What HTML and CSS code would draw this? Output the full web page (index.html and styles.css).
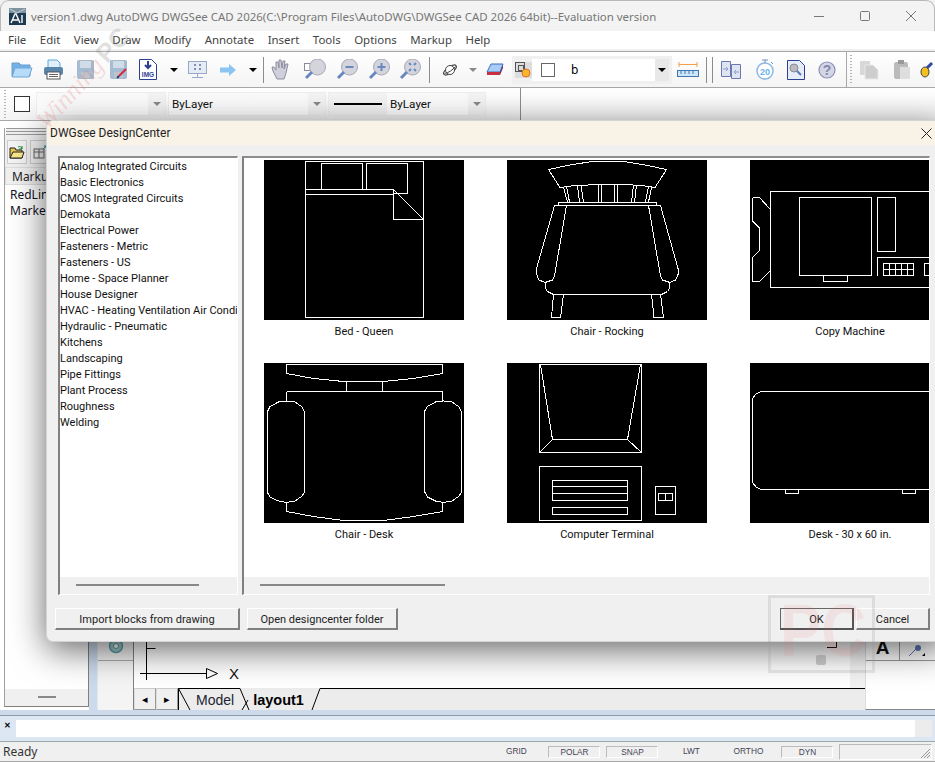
FILE: index.html
```html
<!DOCTYPE html>
<html lang="en">
  <head>
    <meta charset="UTF-8" />
    <title>DWGSee CAD 2026</title>
    <link rel="stylesheet" href="styles.css">
  </head>
  <body>
    <div class="window">
      <header class="titlebar">
        <svg class="applogo" width="17" height="17" viewBox="0 0 17 17"><rect width="17" height="17" fill="#1d3a52"/><path d="M0 0h17v5H0z" fill="#7f929f"/><path d="M1 1l7 4 8-4" fill="none" stroke="#c8d2d8"/><path d="M2 15L6 6h1l4 9M4 12h5M13 7v8" fill="none" stroke="#fff" stroke-width="1.4"/></svg>
        <span class="apptitle">version1.dwg AutoDWG DWGSee CAD 2026(C:\Program Files\AutoDWG\DWGSee CAD 2026 64bit)--Evaluation version</span>
        <div class="winbtns">
          <svg width="12" height="12" viewBox="0 0 12 12"><path d="M1 6.500h10" stroke="#777"/></svg>
          <svg width="12" height="12" viewBox="0 0 12 12"><rect x="1.500" y="1.500" width="9" height="9" rx="1" fill="none" stroke="#777"/></svg>
          <svg width="12" height="12" viewBox="0 0 12 12"><path d="M1 1l10 10M11 1L1 11" stroke="#777"/></svg>
        </div>
      </header>

      <nav class="menubar">
        <span>File</span><span>Edit</span><span>View</span><span>Draw</span><span>Modify</span><span>Annotate</span><span>Insert</span><span>Tools</span><span>Options</span><span>Markup</span><span>Help</span>
      </nav>

      <div class="toolbar tb-one">
        <i class="grip"></i>
        <div class="slot s32"><svg width="22" height="17" viewBox="0 0 22 17"><path d="M1 15V2h7l2 2h9v11z" fill="#74b2e6" stroke="#6a9cc8"/><path d="M1 16l3-9h17l-3 9z" fill="#b8dcf8" stroke="#6aa8dc"/></svg></div>
        <div class="slot s30"><svg width="21" height="21" viewBox="0 0 21 21"><path d="M5 1h9l3 3v5H5z" fill="#dff0fb" stroke="#5aa6dc"/><rect x="1" y="8" width="19" height="8" rx="2" fill="#5a86ae"/><rect x="4" y="13" width="13" height="7" fill="#fff" stroke="#555"/><path d="M6 15.500h9M6 17.500h9" stroke="#666"/></svg></div>
        <div class="slot s35"><svg width="17" height="19" viewBox="0 0 17 19"><rect x=".5" y=".5" width="16" height="18" rx="1" fill="#a4bcd4" stroke="#a8b8c8"/><rect x="3" y="1" width="11" height="7" fill="#d0dde8"/><rect x="4" y="12" width="9" height="6" fill="#bcc4cc"/></svg></div>
        <div class="slot s31"><svg width="18" height="19" viewBox="0 0 18 19"><rect x=".5" y=".5" width="16" height="18" rx="1" fill="#a4bcd4" stroke="#a8b8c8"/><rect x="3" y="1" width="11" height="7" fill="#d0dde8"/><rect x="4" y="12" width="9" height="6" fill="#bcc4cc"/><path d="M9 16l7-7" stroke="#d8253a" stroke-width="2"/><path d="M7 18l2-2" stroke="#23408a" stroke-width="2"/></svg></div>
        <div class="slot s28"><svg width="18" height="21" viewBox="0 0 18 21"><path d="M.5.500h12l5 5v15H.5z" fill="#fff" stroke="#2b3f94"/><path d="M9 2v6M6 6l3 3 3-3" fill="none" stroke="#2b3f94" stroke-width="2"/><text x="9" y="18" class="imgtext">IMG</text></svg></div>
        <div class="slot s24"><i class="drop"></i></div>
        <div class="slot s23"><svg width="19" height="17" viewBox="0 0 19 17"><rect x=".5" y=".5" width="18" height="12" fill="#e6ecf6" stroke="#9aa8c8"/><path d="M6 3h2v2H6zM11 3h2v2h-2zM6 7h2v2H6zM11 7h2v2h-2z" fill="#8090b4"/><path d="M9.500 13v3M4 16.500h11" stroke="#9aa8c8"/></svg></div>
        <div class="slot s38"><svg width="16" height="12" viewBox="0 0 16 12"><path d="M0 3.500h9V0l7 6-7 6V8.500H0z" fill="#8cc4f2"/></svg></div>
        <div class="slot s12"><i class="drop"></i></div>
        <div class="slot s8"><i class="sep"></i></div>
        <div class="slot s28"><svg width="20" height="21" viewBox="0 0 20 21"><path d="M6 20L2 12 1 8l2 0 2 3V3l2 0 1 6V1h2l1 8 1-7h2l-1 8 2-5h2l-2 9-2 6z" fill="#d0d0dc" stroke="#8d8d9f"/></svg></div>
        <div class="slot s40"><svg width="22" height="21" viewBox="0 0 22 21"><rect x=".5" y="4.500" width="8" height="7" fill="#fff" stroke="#8a8a9c"/><circle cx="13.500" cy="8" r="8" fill="#d4d4dc" stroke="#a8a8b8"/><path d="M8 13l-6 6" stroke="#6a88c0" stroke-width="3"/></svg></div>
        <div class="slot s24"><svg width="22" height="21" viewBox="0 0 22 21"><circle cx="13.500" cy="8" r="8" fill="#d4d4dc" stroke="#a8a8b8"/><path d="M9.500 8h8" stroke="#6a88c0" stroke-width="2"/><path d="M8 13l-6 6" stroke="#6a88c0" stroke-width="3"/></svg></div>
        <div class="slot s40"><svg width="22" height="21" viewBox="0 0 22 21"><circle cx="13.500" cy="8" r="8" fill="#d4d4dc" stroke="#a8a8b8"/><path d="M9.500 8h8M13.500 4v8" stroke="#6a88c0" stroke-width="2"/><path d="M8 13l-6 6" stroke="#6a88c0" stroke-width="3"/></svg></div>
        <div class="slot s22"><svg width="22" height="21" viewBox="0 0 22 21"><circle cx="13.500" cy="8" r="8" fill="#d4d4dc" stroke="#a8a8b8"/><path d="M10 4l2 2M17 4l-2 2M10 12l2-2M17 12l-2-2" stroke="#6a88c0" stroke-width="2"/><path d="M8 13l-6 6" stroke="#6a88c0" stroke-width="3"/></svg></div>
        <div class="slot s16"><i class="sep"></i></div>
        <div class="slot s26"><svg width="16" height="14" viewBox="0 0 16 14"><ellipse cx="8" cy="7" rx="7.500" ry="3" transform="rotate(-35 8 7)" fill="none" stroke="#444"/><circle cx="8" cy="7" r="4.500" fill="#fff" stroke="#444"/><path d="M2.500 10.500C6 10 11 7 13.500 3.500" fill="none" stroke="#444"/></svg></div>
        <div class="slot s20"><i class="drop grey"></i></div>
        <div class="slot s23"><svg width="18" height="13" viewBox="0 0 18 13"><path d="M1 9l4-8h12l-3 8z" fill="#a9cdf4" stroke="#3a6fc0"/><path d="M1 9h13v3H1z" fill="#c83040"/><path d="M14 9l3-7v3l-3 7z" fill="#6a2a6a"/></svg></div>
        <div class="layercombo">
          <span class="layericon"><svg width="16" height="16" viewBox="0 0 16 16"><rect x=".5" y=".5" width="9" height="9" fill="none" stroke="#555"/><rect x="3.500" y="3.500" width="5" height="5" fill="#ddd" stroke="#555"/><circle cx="11" cy="11" r="4" fill="#f7b52b" stroke="#e0702a"/></svg></span>
          <div class="layerfield">
            <i class="swatch small"></i>
            <span class="layername">b</span>
          </div>
          <span class="combodrop"><i class="drop"></i></span>
        </div>
        <div class="slot s32"><svg width="22" height="15" viewBox="0 0 22 15"><path d="M2 2.500h18M2 0v5M20 0v5" stroke="#f0a050" fill="none"/><rect x=".5" y="8.500" width="21" height="6" fill="#cfe6fa" stroke="#3f76b0"/><path d="M4 9v3M8 9v3M12 9v3M16 9v3" stroke="#3f76b0"/></svg></div>
        <div class="slot s5"><i class="sep"></i></div>
        <div class="slot s6"><i class="sep"></i></div>
        <div class="slot s32"><svg width="20" height="18" viewBox="0 0 20 18"><path d="M.5.500h9v15h-9z" fill="#dfe4f2" stroke="#6a7ab0"/><path d="M10.500 3.500h9v14h-9z" fill="#dfe4f2" stroke="#6a7ab0"/><path d="M2 8h5M5 6l2 2-2 2M18 11h-5M15 9l-2 2 2 2" fill="none" stroke="#8aa0c8"/></svg></div>
        <div class="slot s36"><svg width="18" height="21" viewBox="0 0 18 21"><circle cx="9" cy="12" r="8" fill="#fff" stroke="#8cb8e4" stroke-width="1.500"/><path d="M6 1h6M9 1v3M15 3l2 2" stroke="#7090c0"/><text x="9" y="15.500" class="timer">20</text></svg></div>
        <div class="slot s26"><svg width="18" height="20" viewBox="0 0 18 20"><path d="M.5.500h12l5 5v14H.5z" fill="#e6ecf8" stroke="#2b3f94"/><circle cx="7" cy="8" r="4" fill="#bbb" stroke="#8a8a9c"/><path d="M10 11l4 4" stroke="#5878b4" stroke-width="2"/></svg></div>
        <div class="slot s36"><svg width="18" height="18" viewBox="0 0 18 18"><circle cx="9" cy="9" r="8" fill="#d4d6e6" stroke="#8c90b8" stroke-width="1.200"/><text x="9" y="14" class="helpmark">?</text></svg></div>
        <div class="slot s3"><i class="sep full"></i></div>
        <div class="slot s6"><i class="grip inner"></i></div>
        <div class="slot s30"><svg width="20" height="20" viewBox="0 0 20 20"><path d="M1 1h10v14H1z" fill="#d8d8d8"/><path d="M6 5h8l5 5v9H6z" fill="#cdcdcd" stroke="#e8e8e8"/></svg></div>
        <div class="slot s36"><svg width="18" height="19" viewBox="0 0 18 19"><rect x="1" y="2" width="14" height="17" rx="2" fill="#bbb"/><rect x="5" y="0" width="6" height="4" fill="#999"/><path d="M7 7h10v12H7z" fill="#dedede"/></svg></div>
        <div class="slot s16"><svg width="16" height="18" viewBox="0 0 16 18"><ellipse cx="5" cy="11" rx="4" ry="5" fill="#f4c020" stroke="#444"/><path d="M7 7l5-5" stroke="#3048a0" stroke-width="3"/></svg></div>
      </div>

      <div class="toolbar tb-two">
        <i class="grip"></i>
        <i class="swatch"></i>
        <div class="combo c-color"><span class="combotext"></span><span class="combodrop"><i class="drop grey"></i></span></div>
        <div class="combo c-layer"><span class="combotext">ByLayer</span><span class="combodrop"><i class="drop grey"></i></span></div>
        <div class="combo c-line"><i class="lineweight"></i><span class="combotext">ByLayer</span><span class="combodrop"><i class="drop grey"></i></span></div>
        <i class="rowsep"></i>
      </div>

      <main class="workspace">
        <aside class="dock">
          <div class="dockgrip"></div>
          <div class="docktools">
            <span class="dockbtn"><svg width="16" height="14" viewBox="0 0 16 14"><path d="M1 13V3h5l1 2h6v8z" fill="#e8c850" stroke="#222"/><path d="M1 13l3-6h11l-2 6z" fill="#f8e888" stroke="#222"/><path d="M9 2c2-1 4 0 4 2M13 1v3h-3" fill="none" stroke="#1a8a3a"/></svg></span>
            <span class="dockbtn"><svg width="14" height="14" viewBox="0 0 14 14"><rect x="1" y="4" width="10" height="9" fill="#eee" stroke="#666"/><path d="M1 7h10M6 4v9" stroke="#666"/><path d="M10 4l3-3M11 1h2v2" fill="none" stroke="#2a8a9a"/></svg></span>
          </div>
          <div class="dockhead">Markup</div>
          <ul class="docklist">
            <li>RedLine</li>
            <li>Markers</li>
          </ul>
          <div class="dockscroll"><i></i></div>
        </aside>
        <div class="gutter"></div>
        <div class="vtools">
          <div class="vbtn"><svg width="16" height="16" viewBox="0 0 16 16"><circle cx="8" cy="8" r="6.500" fill="#9cc8c8" stroke="#58a0a8" stroke-width="1.500"/><circle cx="8" cy="8" r="2.500" fill="#fff" stroke="#58a0a8"/></svg></div>
        </div>
        <section class="canvasarea">
          <div class="canvas">
            <svg class="ucs" width="100" height="46" viewBox="0 0 100 46"><path d="M6.500 0v38M6.500 6.500h9M0 31.500h66" stroke="#000" fill="none"/><path d="M66.500 26.500l11 5-11 5z" fill="none" stroke="#000"/></svg>
            <span class="ucsx">X</span>
            <svg class="corner" width="10" height="7" viewBox="0 0 10 7"><path d="M0 6.500h9.500V0" fill="none" stroke="#000"/></svg>
          </div>
          <div class="tabs">
            <button class="arrowbtn">&#9666;</button>
            <button class="arrowbtn">&#9656;</button>
            <svg class="tabshape" width="687" height="22" viewBox="0 0 687 22"><path d="M.5 22V.5H62L71 22M.5.500L12 22M64 22l6-10M142 .500h545M142 .500L134 22" fill="none" stroke="#000"/></svg>
            <span class="tab">Model</span>
            <span class="tab active">layout1</span>
          </div>
        </section>
        <div class="righttools">
          <div class="rightrow">
            <span class="rightcell"><b class="bigA">A</b></span>
            <span class="rightcell"><svg width="18" height="12" viewBox="0 0 18 12"><path d="M1 11l7-7" stroke="#5a78b8"/><circle cx="10" cy="3" r="3" fill="#5a78b8"/><path d="M14 11l3-3v3z" fill="#000"/></svg></span>
          </div>
        </div>
      </main>

      <div class="cmdbar">
        <span class="cmdclose">&#10005;</span>
        <div class="cmdinput"></div>
        <div class="cmdend"></div>
      </div>

      <footer class="statusbar">
        <span class="ready">Ready</span>
        <div class="modes">
          <span class="mode m-grid">GRID</span>
          <span class="mode on m-polar">POLAR</span>
          <span class="mode on m-snap">SNAP</span>
          <span class="mode m-lwt">LWT</span>
          <span class="mode m-ortho">ORTHO</span>
          <span class="mode on m-dyn">DYN</span>
        </div>
        <div class="sizebox"><svg width="12" height="12" viewBox="0 0 12 12"><path d="M11 2L2 11M11 5l-6 6M11 8l-3 3" stroke="#999"/></svg></div>
      </footer>

      <div class="dialog">
        <div class="dlgtitle">
          <span>DWGsee DesignCenter</span>
          <svg class="dlgclose" width="11" height="11" viewBox="0 0 11 11"><path d="M.5.500l10 10M10.500.500l-10 10" stroke="#222"/></svg>
        </div>
        <div class="panes">
          <div class="pane listpane">
            <ul class="catlist">
              <li>Analog Integrated Circuits</li>
              <li>Basic Electronics</li>
              <li>CMOS Integrated Circuits</li>
              <li>Demokata</li>
              <li>Electrical Power</li>
              <li>Fasteners - Metric</li>
              <li>Fasteners - US</li>
              <li>Home - Space Planner</li>
              <li>House Designer</li>
              <li>HVAC - Heating Ventilation Air Condit</li>
              <li>Hydraulic - Pneumatic</li>
              <li>Kitchens</li>
              <li>Landscaping</li>
              <li>Pipe Fittings</li>
              <li>Plant Process</li>
              <li>Roughness</li>
              <li>Welding</li>
            </ul>
            <div class="hscroll"><i class="thumb-left"></i></div>
          </div>
          <div class="pane gridpane">
            <div class="blocks">
              <figure class="block">
                <svg class="cad" width="200" height="160" viewBox="0 0 200 160">
                  <path d="M41.500 1.500h118v156h-118zM57.500 29.500v-26h41v26M102.500 29.500v-26h41v30h-14M41.500 29.500h88M41.500 34.500h88M129.500 29.500v30h30M129.500 29.500l30 30"/>
                </svg>
                <figcaption>Bed - Queen</figcaption>
              </figure>
              <figure class="block">
                <svg class="cad" width="200" height="160" viewBox="0 0 200 160">
                  <path d="M41.500 9.500L63 5l22-3.500h31.500L138 5l21.500 4.500L148 27.500 134.500 25.500 116.500 24.500h-22L68 25.500l-15 2zM41.500 9.500L53 27.500"/>
                  <path d="M56.500 27.500L60.500 42M59.500 26.500L62.500 42M70.500 25.500L72.500 42M74 25.500L76.500 42M91.500 24.500V42M94.500 24.500V42M107.500 24.500V42M110.500 24.500V42M126.500 25.500L124.500 42M129.500 25.500L127.500 42M141.500 26.500L138.500 42M144.500 27.500L141.500 42"/>
                  <path d="M51.500 42.500h98v3h-98zM57.500 42.500h87"/>
                  <path d="M47.500 45.500h12L47.500 116 45.500 120 38 122.500 32 120 29.500 114V108.500zM141.500 45.500h12l17.500 63v6L168.500 120 163 122.500 155.500 120 153.500 116z"/>
                  <path d="M38.500 122.500v6l2 3 6 3h108l6-3 2-3v-6M46.500 134.500L44.500 157.500h9L56.500 134.500M144.500 134.500L147 157.500h9.500L153.500 134.500"/>
                </svg>
                <figcaption>Chair - Rocking</figcaption>
              </figure>
              <figure class="block">
                <svg class="cad" width="200" height="160" viewBox="0 0 200 160">
                  <path d="M205 31.500H20.500v96H205M2.500 37.500h7L20.500 49.500M20.500 110.500l-11 11h-7v-24l6.500-6.500V67.500L2.500 61V37.500"/>
                  <path d="M49.500 37.500h72v78h-72zM73.500 115.500v6h24v-6M127.500 37.500h18v54h-18zM127.500 115.500v-18H205"/>
                  <path d="M133.500 103.500h30v12h-30zM133.500 109.500h30M139.500 103.500v12M145.500 103.500v12M151.500 103.500v12M157.500 103.500v12M174.500 103.500h12v12h-12z"/>
                </svg>
                <figcaption>Copy Machine</figcaption>
              </figure>
              <figure class="block">
                <svg class="cad" width="200" height="160" viewBox="0 0 200 160">
                  <path d="M22.500 1.500h156v9L149.500 15.500 119.500 18.500h-40L49.500 15.500 22.500 10.500zM82.500 18.500v10M118.500 18.500v10M22.500 28.500h156M22.500 28.500v10M178.500 28.500v10"/>
                  <path d="M3.500 48.500L6 43.500 14.500 39l8-1 8.500 1 6.500 4.500 3 5v81l-3 4L31 138l-8.500 1.500L14.500 138l-8.500-4-2.500-4.500z"/>
                  <path d="M160.500 48.500l3-5 8-4.500 8-1 8.500 1 6.500 4.500 3 5v81l-3 4-6.500 4.500-8.500 1.500-8-1.500-8-4-2.500-4.500z"/>
                  <path d="M22.500 139.500v9l27 5 30 4h40l30-4 29-5v-9"/>
                </svg>
                <figcaption>Chair - Desk</figcaption>
              </figure>
              <figure class="block">
                <svg class="cad" width="200" height="160" viewBox="0 0 200 160">
                  <path d="M32.500 1.500h102v88h-102zM33.500 1.500L45.500 76.500h75L133.500 1.500M45.500 76.500l-13 13M120.500 76.500l14 13"/>
                  <path d="M32.500 103.500h102v54h-102zM45.500 117.500h75v20h-75zM45.500 123.500h75M45.500 130.500h75M45.500 144.500h75v7h-75z"/>
                  <path d="M148.500 123.500h20v28h-20zM151.500 130.500h14v7h-14zM158.500 130.500v7"/>
                </svg>
                <figcaption>Computer Terminal</figcaption>
              </figure>
              <figure class="block">
                <svg class="cad" width="200" height="160" viewBox="0 0 200 160">
                  <path d="M205 28.500H11L6 31 3 35 2.500 40v74l.500 6 3 4 5 2.500H205M35.500 126.500v4h13v-4M152.500 126.500v4h13v-4"/>
                </svg>
                <figcaption>Desk - 30 x 60 in.</figcaption>
              </figure>
            </div>
            <div class="hscroll"><i class="thumb-right"></i></div>
          </div>
        </div>
        <div class="dlgbuttons">
          <button class="btn b-import">Import blocks from drawing</button>
          <button class="btn b-open">Open designcenter folder</button>
          <button class="btn b-ok">OK</button>
          <button class="btn b-cancel">Cancel</button>
        </div>
      </div>

      <div class="mark-top"><span class="mark-win">Winning</span> <span class="mark-pc">PC</span></div>
      <div class="mark-box"><span class="mark-letters">PC</span><i class="mark-dot"></i></div>
      <i class="mark-band"></i>
    </div>
  </body>
</html>
```

FILE: styles.css
```css
* {
  box-sizing: border-box;
}
body {
  margin: 0;
  background: #fff;
  font-family: "Noto Sans", sans-serif;
  font-size: 12px;
  color: #222;
}
ul {
  list-style: none;
  margin: 0;
  padding: 0;
}
i {
  display: block;
}
.window {
  position: relative;
  width: 935px;
  height: 762px;
  overflow: hidden;
  background: #f0f0f0;
}

/* title + menu */
.titlebar {
  display: flex;
  align-items: center;
  height: 31px;
  padding-left: 8px;
  background: #f3f3f3;
  border-top: 1px solid #b8b8b8;
  border-left: 1px solid #b8b8b8;
  border-right: 1px solid #b8b8b8;
  border-radius: 9px 9px 0 0;
}
.apptitle {
  margin-left: 5px;
  color: #777;
  font-size: 11.45px;
  white-space: nowrap;
}
.winbtns {
  display: flex;
  gap: 34px;
  margin-left: auto;
  margin-right: 17px;
}
.menubar {
  display: flex;
  gap: 13.500px;
  height: 21px;
  padding: 1px 0 0 8px;
  background: #fff;
  border-bottom: 1px solid #a8a8a8;
  box-shadow: inset 0 -2px 0 #f0f0f0;
  color: #444;
  font-size: 11.45px;
}

/* toolbars */
.toolbar {
  display: flex;
  align-items: center;
  background: linear-gradient(#fff, #f4f4f4);
  border-bottom: 1px solid #a8a8a8;
}
.tb-one {
  height: 36px;
  padding-left: 4px;
}
.tb-two {
  height: 32px;
  padding-left: 4px;
  border-bottom: 0;
}
.grip {
  width: 2px;
  height: 28px;
  margin-right: 2px;
  background: repeating-linear-gradient(#b4b4b4 0 1px, transparent 1px 3px);
}
.grip.inner {
  margin: 0;
  height: 30px;
}
.slot {
  display: flex;
  flex: none;
  align-items: center;
  justify-content: center;
  height: 28px;
}
.s3 { width: 3px; }
.s5 { width: 5px; }
.s6 { width: 6px; }
.s8 { width: 8px; }
.s12 { width: 12px; }
.s16 { width: 16px; }
.s20 { width: 20px; }
.s22 { width: 22px; }
.s23 { width: 23px; }
.s24 { width: 24px; }
.s26 { width: 26px; }
.s28 { width: 28px; }
.s30 { width: 30px; }
.s31 { width: 31px; }
.s32 { width: 32px; }
.s35 { width: 35px; }
.s36 { width: 36px; }
.s38 { width: 38px; }
.s40 { width: 40px; }
.drop {
  width: 0;
  height: 0;
  border-left: 4px solid transparent;
  border-right: 4px solid transparent;
  border-top: 4px solid #000;
}
.drop.grey {
  border-top-color: #8a8a8a;
}
.sep {
  width: 1px;
  height: 26px;
  background: #8c8c8c;
}
.sep.full {
  height: 36px;
  background: #a8a8a8;
}
.imgtext {
  font: bold 6.500px "Liberation Sans", sans-serif;
  text-anchor: middle;
  fill: #2b3f94;
}
.timer {
  font: bold 9px "Liberation Sans", sans-serif;
  text-anchor: middle;
  fill: #69b4ee;
}
.helpmark {
  font: bold 14px "Liberation Sans", sans-serif;
  text-anchor: middle;
  fill: #8488ac;
}
.layercombo {
  display: flex;
  flex: none;
  align-items: center;
  width: 160px;
  height: 28px;
  margin-left: 6px;
  padding: 3px;
  background: #f0f0f0;
}
.layercombo .combodrop {
  height: 22px;
  width: 14px;
  background: #e8e8e8;
}
.layericon {
  display: flex;
  flex: none;
  width: 17px;
  height: 16px;
  background: #ddd;
}
.layerfield {
  display: flex;
  flex: 1;
  align-items: center;
  height: 22px;
  background: #fff;
}
.swatch {
  flex: none;
  width: 16px;
  height: 16px;
  margin-left: 6px;
  background: #fff;
  border: 1px solid #333;
}
.swatch.small {
  width: 14px;
  height: 14px;
  margin-left: 9px;
  border-color: #666;
}
.layername {
  margin-left: 16px;
  color: #000;
}
.combo {
  display: flex;
  flex: none;
  align-items: center;
  height: 24px;
  background: #f4f4f4;
  border: 1px solid #efefef;
  font-family: Roboto, sans-serif;
  font-size: 11.7px;
}
.c-color {
  width: 130px;
  margin-left: 6px;
}
.c-layer {
  width: 158px;
  margin-left: 2px;
}
.c-line {
  width: 158px;
  margin-left: 2px;
}
.combotext {
  flex: 1;
  align-self: stretch;
  padding: 4px 0 0 3px;
  background: linear-gradient(#fafafa, #fff);
  color: #111;
}
.combodrop {
  display: flex;
  flex: none;
  align-items: center;
  justify-content: center;
  width: 17px;
  align-self: stretch;
}
.lineweight {
  flex: none;
  width: 48px;
  height: 2px;
  margin: 0 5px 0 5px;
  background: #000;
}
.rowsep {
  width: 1px;
  height: 32px;
  margin-left: 34px;
  background: #8c8c8c;
}

/* main area */
.workspace {
  display: flex;
  height: 590px;
  background: #fff;
  border-top: 1px solid #a8a8a8;
}
.dock {
  position: relative;
  width: 85px;
  margin: 7px 0 3px 4px;
  border: 1px solid #808080;
  border-top: 0;
  border-left-color: #a0a0a0;
  background: #fff;
}
.dockgrip {
  height: 7px;
  margin: 0 1px;
  background: repeating-linear-gradient(#999 0 1px, #f0f0f0 1px 3px);
}
.docktools {
  display: flex;
  gap: 3px;
  padding: 5px 1px 3px 2px;
  background: #f0f0f0;
}
.dockbtn {
  display: flex;
  align-items: center;
  justify-content: center;
  width: 20px;
  height: 24px;
  background: #f4f4f4;
  border: 1px solid #ccc;
}
.dockhead {
  height: 18px;
  padding: 0 0 0 6px;
  background: #f0f0f0;
  border: 1px solid #ddd;
}
.docklist {
  padding: 2px 0 0 5px;
  line-height: 16px;
  color: #112;
}
.dockscroll {
  position: absolute;
  left: 0;
  right: 0;
  bottom: 0;
  height: 17px;
  background: #f0f0f0;
}
.dockscroll i {
  width: 18px;
  height: 2px;
  margin: 7px auto 0;
  background: #888;
}
.gutter {
  width: 8px;
  background: #ccdaec;
}
.vtools {
  position: relative;
  width: 37px;
  background: #f4f4f4;
  border-right: 1px solid #808080;
  border-left: 1px solid #e0e8f0;
}
.vbtn {
  position: absolute;
  left: 0;
  right: 0;
  bottom: 49px;
  display: flex;
  justify-content: center;
  padding-top: 17px;
  height: 40px;
  border-bottom: 1px solid #aaa;
}
.canvasarea {
  display: flex;
  flex-direction: column;
  width: 731px;
}
.canvas {
  position: relative;
  flex: 1;
  background: #fff;
}
.ucs {
  position: absolute;
  left: 6px;
  bottom: 0;
}
.ucsx {
  position: absolute;
  left: 95px;
  bottom: 6px;
  font: 15px "Liberation Sans", sans-serif;
  color: #111;
}
.corner {
  position: absolute;
  left: 693px;
  bottom: 40px;
}
.tabs {
  position: relative;
  display: flex;
  align-items: flex-start;
  height: 22px;
  background: #ececec;
  font-family: "Liberation Sans", sans-serif;
}
.arrowbtn {
  width: 22px;
  height: 22px;
  padding: 0;
  background: #f0f0f0;
  border: 1px solid #999;
  border-top-color: #ccc;
  border-left-color: #ddd;
  font-size: 11px;
  color: #000;
}
.tabshape {
  position: absolute;
  left: 44px;
  top: 0;
}
.tab {
  position: relative;
  margin: 4px 0 0 18px;
  font-size: 14px;
  color: #223;
}
.tab.active {
  margin-left: 19px;
  font-size: 14.500px;
  font-weight: bold;
  color: #000;
}
.righttools {
  flex: 1;
  background: #fff;
  border-left: 1px solid #ddd;
  border-bottom: 1px solid #888;
}
.rightrow {
  display: flex;
  height: 540px;
  align-items: flex-end;
  border-bottom: 1px solid #999;
}
.rightcell {
  display: flex;
  align-items: flex-end;
  justify-content: center;
  width: 34px;
  height: 30px;
  padding-bottom: 3px;
  border-right: 1px solid #999;
}
.rightcell:last-child {
  border-right: 0;
}
.bigA {
  font: bold 19px "Liberation Sans", sans-serif;
  line-height: 18px;
  color: #111;
  border-top: 1px solid transparent;
}

/* command + status */
.cmdbar {
  display: flex;
  align-items: stretch;
  height: 32px;
  padding: 10px 0 4px 4px;
  background: linear-gradient(#ccdaec 0 5px, #8e98a4 5px 6px, #dde7f3 6px);
  border-bottom: 1px solid #9aa;
}
.cmdclose {
  width: 12px;
  font-size: 8px;
  line-height: 10px;
  font-weight: bold;
  color: #000;
}
.cmdinput {
  width: 899px;
  background: #fff;
}
.cmdend {
  flex: 1;
  margin-right: 3px;
  background: #ececec;
}
.statusbar {
  display: flex;
  align-items: center;
  height: 20px;
  background: #f0f0f0;
  border-bottom: 1px solid #aaa;
}
.ready {
  margin-left: 3px;
  color: #333;
}
.modes {
  display: flex;
  align-items: center;
  margin-left: 466px;
  font: 8.300px "Liberation Sans", sans-serif;
  color: #445;
}
.mode {
  display: block;
  height: 12px;
  line-height: 11px;
  text-align: center;
}
.mode.on {
  border: 1px solid #bbb;
  border-bottom-color: #fff;
  border-right-color: #fff;
}
.m-grid { width: 26px; }
.m-polar { width: 52px; margin-left: 19px; }
.m-snap { width: 52px; margin-left: 6px; }
.m-lwt { width: 24px; margin-left: 21px; }
.m-ortho { width: 36px; margin-left: 27px; }
.m-dyn { width: 52px; margin-left: 15px; }
.sizebox {
  display: flex;
  align-items: flex-end;
  justify-content: flex-end;
  width: 93px;
  height: 16px;
  margin-left: 6px;
  border: 1px solid #bbb;
  border-bottom-color: #fff;
  border-right-color: #fff;
}

/* design center dialog */
.dialog {
  position: absolute;
  left: 46px;
  top: 120px;
  width: 900px;
  height: 522px;
  background: #f0f0f0;
  border-radius: 7px;
  border: 1px solid #d4d4d4;
  box-shadow: 0 8px 34px rgba(0, 0, 0, 0.6);
  font-family: Roboto, sans-serif;
  font-size: 11px;
}
.dlgtitle {
  display: flex;
  align-items: center;
  justify-content: space-between;
  height: 24px;
  padding: 0 13px 0 3px;
  background: #f9f2e6;
  border-radius: 7px 0 0 0;
  color: #222;
  font-size: 12px;
  white-space: nowrap;
}
.panes {
  display: flex;
  gap: 4px;
  width: 872px;
  height: 439px;
  margin: 11px 0 0 11px;
}
.pane {
  display: flex;
  flex-direction: column;
  border-top: 2px solid #8c8c8c;
  border-left: 2px solid #808080;
  border-right: 1px solid #fff;
  border-bottom: 1px solid #fff;
  overflow: hidden;
}
.listpane {
  width: 180px;
}
.gridpane {
  width: 688px;
}
.catlist {
  flex: 1;
  padding-top: 1px;
  background: #fff;
  line-height: 16px;
  white-space: nowrap;
  color: #111;
  overflow: hidden;
}
.hscroll {
  flex: none;
  height: 17px;
  padding-top: 7px;
  background: #f0f0f0;
}
.thumb-left {
  width: 123px;
  height: 2px;
  margin-left: 16px;
  background: #888;
}
.thumb-right {
  width: 185px;
  height: 2px;
  margin-left: 16px;
  background: #888;
}
.blocks {
  flex: 1;
  display: grid;
  grid-template-columns: repeat(3, 200px);
  grid-auto-rows: 203px;
  column-gap: 43px;
  padding: 2px 0 0 20px;
  background: #fff;
  overflow: hidden;
}
.block {
  margin: 0;
  width: 200px;
}
.cad {
  display: block;
  background: #000;
  fill: none;
  stroke: #fff;
  stroke-width: 1;
  shape-rendering: crispEdges;
}
.block figcaption {
  margin-top: 4px;
  line-height: 16px;
  text-align: center;
  color: #111;
}
.dlgbuttons {
  display: flex;
  width: 875px;
  margin: 13px 0 0 8px;
}
.btn {
  height: 22px;
  padding: 1px 0 0;
  background: #f0f0f0;
  border: 1px solid #fff;
  border-right: 2px solid #808080;
  border-bottom: 2px solid #808080;
  font: 11px Roboto, sans-serif;
  color: #222;
}
.b-import { width: 185px; }
.b-open { width: 151px; margin-left: 7px; }
.b-ok {
  width: 74px;
  margin-left: auto;
  border: 1px solid #666;
  border-right: 2px solid #555;
  border-bottom: 2px solid #555;
}
.b-cancel { width: 74px; margin-left: 2px; }

/* watermarks */
.mark-top {
  position: absolute;
  left: 20px;
  top: 63px;
  transform: rotate(-48deg);
  white-space: nowrap;
  pointer-events: none;
}
.mark-win {
  font: italic 26px "Liberation Serif", serif;
  color: rgba(230, 110, 110, 0.22);
}
.mark-pc {
  font: bold 26px "Liberation Sans", sans-serif;
  color: rgba(120, 120, 120, 0.22);
}
.mark-box {
  position: absolute;
  left: 768px;
  top: 595px;
  width: 107px;
  height: 78px;
  border: 3px solid rgba(150, 150, 150, 0.22);
  pointer-events: none;
}
.mark-letters {
  position: absolute;
  left: 9px;
  top: -3px;
  font: bold 62px "Liberation Sans", sans-serif;
  color: rgba(240, 110, 120, 0.11);
  transform: scaleY(1.2);
}
.mark-dot {
  position: absolute;
  left: 45px;
  top: 57px;
  width: 10px;
  height: 10px;
  border-radius: 2px;
  background: rgba(130, 130, 130, 0.45);
}
.mark-band {
  position: absolute;
  left: 850px;
  top: 642px;
  width: 15px;
  height: 46px;
  background: rgba(0, 0, 0, 0.05);
}
```
